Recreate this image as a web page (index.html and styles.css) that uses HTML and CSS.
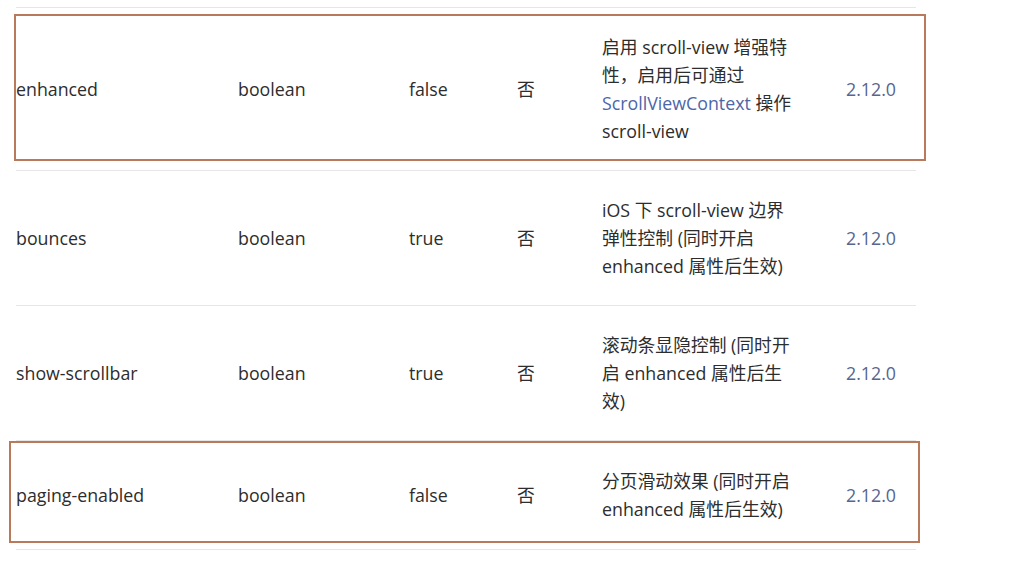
FILE: index.html
```html
<!DOCTYPE html>
<html lang="zh">
<head>
<meta charset="utf-8">
<link rel="stylesheet" href="styles.css">
</head>
<body>
<div class="page">
  <table class="props">
    <colgroup>
      <col class="c-name"><col class="c-type"><col class="c-def"><col class="c-req"><col class="c-desc"><col class="c-ver">
    </colgroup>
    <tbody>
      <tr>
        <td>enhanced</td>
        <td>boolean</td>
        <td>false</td>
        <td>否</td>
        <td class="desc">启用 scroll-view 增强特性，启用后可通过 <a class="link">ScrollViewContext</a> 操作 scroll-view</td>
        <td class="ver">2.12.0</td>
      </tr>
      <tr>
        <td>bounces</td>
        <td>boolean</td>
        <td>true</td>
        <td>否</td>
        <td class="desc">iOS 下 scroll-view 边界弹性控制 (同时开启 enhanced 属性后生效)</td>
        <td class="ver">2.12.0</td>
      </tr>
      <tr>
        <td>show-scrollbar</td>
        <td>boolean</td>
        <td>true</td>
        <td>否</td>
        <td class="desc">滚动条显隐控制 (同时开启 enhanced 属性后生效)</td>
        <td class="ver">2.12.0</td>
      </tr>
      <tr class="last">
        <td>paging-enabled</td>
        <td>boolean</td>
        <td>false</td>
        <td>否</td>
        <td class="desc">分页滑动效果 (同时开启 enhanced 属性后生效)</td>
        <td class="ver">2.12.0</td>
      </tr>
    </tbody>
  </table>
  <div class="mark mark-1"></div>
  <div class="mark mark-2"></div>
</div>
</body>
</html>
```

FILE: styles.css
```css
html, body {
  margin: 0;
  padding: 0;
  background: #fff;
}
body {
  font-family: "Open Sans", "Noto Sans CJK SC", sans-serif;
  font-size: 17.8px;
  color: #2d2d2d;
}
.page {
  position: relative;
  padding: 7px 0 0 16px;
}
.props {
  width: 900px;
  table-layout: fixed;
  border-collapse: collapse;
}
.c-name { width: 222px; }
.c-type { width: 171px; }
.c-def { width: 108px; }
.c-req { width: 85px; }
.c-desc { width: 244px; }
.c-ver { width: 70px; }
.props tr {
  border-top: 1px solid #e6e6e6;
  border-bottom: 1px solid #e6e6e6;
}
.props td {
  padding: 25px 0;
  line-height: 28px;
  vertical-align: middle;
  text-align: left;
}
.props tr.last td {
  padding: 26px 0;
}
.props td.desc {
  padding-right: 48px;
}
.link {
  color: #4d66a8;
  text-decoration: none;
}
.ver {
  color: #56668f;
}
.mark {
  position: absolute;
  border: 2px solid #b87a5a;
  box-sizing: border-box;
  pointer-events: none;
}
.mark-1 {
  left: 14px;
  top: 14px;
  width: 912px;
  height: 147px;
}
.mark-2 {
  left: 9px;
  top: 441px;
  width: 911px;
  height: 102px;
}
```
